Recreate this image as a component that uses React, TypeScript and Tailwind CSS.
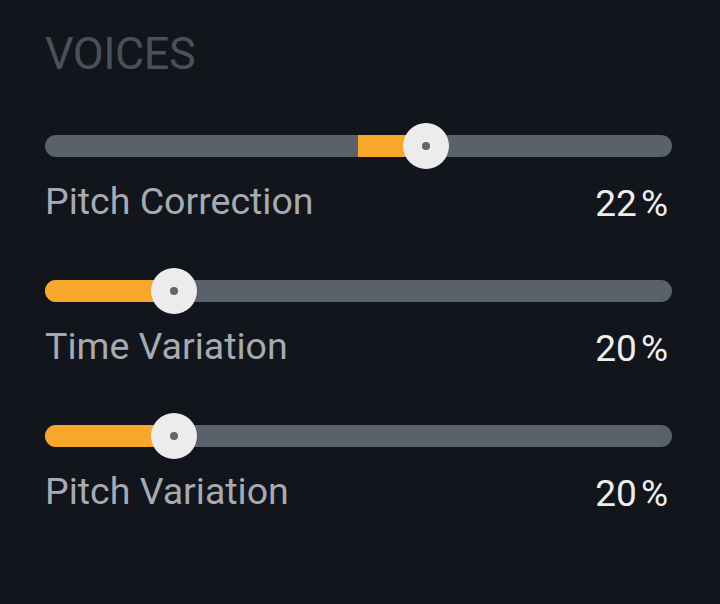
import React from "react";

type Voice = {
  label: string;
  value: string;
  thumb: number; // thumb centre, px from track start
  from: number; // fill start, px from track start
};

const voices: Voice[] = [
  { label: "Pitch Correction", value: "22", thumb: 381, from: 313 },
  { label: "Time Variation", value: "20", thumb: 129, from: 0 },
  { label: "Pitch Variation", value: "20", thumb: 129, from: 0 },
];

function VoiceSlider({ v }: { v: Voice }) {
  const left = Math.min(v.from, v.thumb);
  const width = Math.abs(v.thumb - v.from);
  const roundedStart = v.from === 0;
  return (
    <div className="flex flex-col">
      <div className="relative h-[22px] w-[627px] rounded-full bg-[#59616a]">
        <div
          className={`absolute top-0 h-[22px] bg-[#f7a72b] ${roundedStart ? "rounded-l-full" : ""}`}
          style={{ left, width }}
        />
        <div
          className="absolute top-1/2 flex h-[46px] w-[46px] -translate-x-1/2 -translate-y-1/2 items-center justify-center rounded-full bg-[#ececec]"
          style={{ left: v.thumb }}
        >
          <div className="h-[8px] w-[8px] rounded-full bg-[#5f666e]" />
        </div>
      </div>
      <div className="mt-[24px] flex items-baseline justify-between pr-[4px]">
        <span className="text-[37.5px] leading-[40px] text-[#a6aab2]">{v.label}</span>
        <span className="relative top-[2px] text-[37px] leading-[40px] text-[#eeeeee]">
          {v.value}
          <span className="ml-[4px]">%</span>
        </span>
      </div>
    </div>
  );
}

export default function App() {
  return (
    <div
      className="h-[604px] w-[720px] overflow-hidden bg-[#12151b] pl-[45px] pt-[28px]"
      style={{ fontFamily: "Roboto, 'Noto Sans', sans-serif" }}
    >
      <div className="text-[45px] leading-[52px] tracking-[-0.5px] text-[#4a5058]">VOICES</div>
      <div className="mt-[55px] flex w-[627px] flex-col gap-[58px]">
        {voices.map((v) => (
          <VoiceSlider key={v.label} v={v} />
        ))}
      </div>
    </div>
  );
}
